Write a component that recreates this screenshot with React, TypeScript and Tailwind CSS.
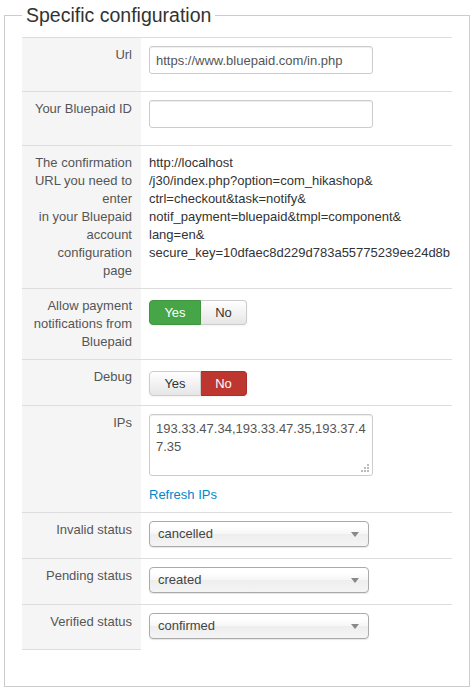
import React from "react";

const font = { fontFamily: '"Liberation Sans", Arial, sans-serif' };

function Row({ label, children, last }: { label: React.ReactNode; children: React.ReactNode; last?: boolean }) {
    return (
        <div className="flex border-t border-[#ddd]">
            <div className={"w-[119px] shrink-0 bg-[#f5f5f5] pl-[8px] pr-[9px] py-[8px] text-right text-[#555] " + (last ? "border-b border-[#ddd]" : "")}>
                {label}
            </div>
            <div className="flex-1 px-[8px] py-[8px] text-[#333]">{children}</div>
        </div>
    );
}

function YesNo({ yes }: { yes: boolean }) {
    const off = "bg-gradient-to-b from-white to-[#e6e6e6] text-[#333] border-[#ccc]";
    return (
        <div className="mt-[3px] mb-[1px] flex h-[25px] w-[98px] text-[13px] shadow-[0_1px_2px_rgba(0,0,0,0.05)]">
            <button className={"w-[52px] rounded-l-[4px] border " + (yes ? "bg-[#46a546] text-white border-[#3f963f]" : off)}>Yes</button>
            <button className={"w-[46px] rounded-r-[4px] border border-l-0 " + (!yes ? "bg-[#bd362f] text-white border-[#a9302a]" : off)}>No</button>
        </div>
    );
}

function Select({ value }: { value: string }) {
    return (
        <div className="mb-[3px] flex h-[26px] w-[220px] items-center justify-between rounded-[4px] border border-[#aaa] bg-[linear-gradient(#fff_20%,#f6f6f6_50%,#eee_52%,#f4f4f4_100%)] pl-[8px] pr-[9px] text-[#444] shadow-[0_1px_1px_rgba(0,0,0,0.1)]">
            <span>{value}</span>
            <svg width="8" height="5" viewBox="0 0 8 5"><path d="M0 0h8L4 5z" fill="#888" /></svg>
        </div>
    );
}

export default function App() {
    return (
        <div className="min-h-[694px] bg-white pt-[4px] text-[13px] leading-[18px]" style={font}>
            <fieldset className="ml-[4px] w-[466px] border border-[#ccc] px-[17px] pt-[11px] pb-[36px]">
                <legend className="px-[4px] text-[19.5px] leading-[22px] text-[#333]">Specific configuration</legend>
                <div className="w-[430px]">
                    <Row label="Url">
                        <input defaultValue="https://www.bluepaid.com/in.php" className="mb-[9px] block h-[28px] w-[224px] rounded-[3px] border border-[#ccc] px-[6px] text-[13px] text-[#555] shadow-[inset_0_1px_1px_rgba(0,0,0,0.075)] outline-none" />
                    </Row>
                    <Row label="Your Bluepaid ID">
                        <input className="mb-[9px] block h-[28px] w-[224px] rounded-[3px] border border-[#ccc] px-[6px] text-[13px] text-[#555] shadow-[inset_0_1px_1px_rgba(0,0,0,0.075)] outline-none" />
                    </Row>
                    <Row label={<>The confirmation URL you need to enter<br />in your Bluepaid account configuration page</>}>
                        <div className="whitespace-nowrap">
                            http://localhost<br />
                            /j30/index.php?option=com_hikashop&amp;<br />
                            ctrl=checkout&amp;task=notify&amp;<br />
                            notif_payment=bluepaid&amp;tmpl=component&amp;<br />
                            lang=en&amp;<br />
                            secure_key=10dfaec8d229d783a55775239ee24d8b
                        </div>
                    </Row>
                    <Row label="Allow payment notifications from Bluepaid">
                        <YesNo yes={true} />
                    </Row>
                    <Row label="Debug">
                        <YesNo yes={false} />
                    </Row>
                    <Row label="IPs">
                        <div className="relative mb-[10px] w-[224px]">
                            <textarea
                                defaultValue="193.33.47.34,193.33.47.35,193.37.47.35"
                                className="block h-[62px] w-[224px] resize-none break-all rounded-[3px] border border-[#ccc] pl-[6px] pr-[3px] pt-[5px] text-[13px] leading-[18px] text-[#555] shadow-[inset_0_1px_1px_rgba(0,0,0,0.075)] outline-none"
                            />
                            <svg className="absolute bottom-[3px] right-[3px]" width="9" height="9" viewBox="0 0 9 9">
                                <g fill="#bbb">
                                    <rect x="6" y="0" width="2" height="2" />
                                    <rect x="3" y="3" width="2" height="2" />
                                    <rect x="6" y="3" width="2" height="2" />
                                    <rect x="0" y="6" width="2" height="2" />
                                    <rect x="3" y="6" width="2" height="2" />
                                    <rect x="6" y="6" width="2" height="2" />
                                </g>
                            </svg>
                        </div>
                        <a href="#" className="text-[#0088cc]">Refresh IPs</a>
                    </Row>
                    <Row label="Invalid status">
                        <Select value="cancelled" />
                    </Row>
                    <Row label="Pending status">
                        <Select value="created" />
                    </Row>
                    <Row label="Verified status" last>
                        <Select value="confirmed" />
                    </Row>
                </div>
            </fieldset>
        </div>
    );
}
